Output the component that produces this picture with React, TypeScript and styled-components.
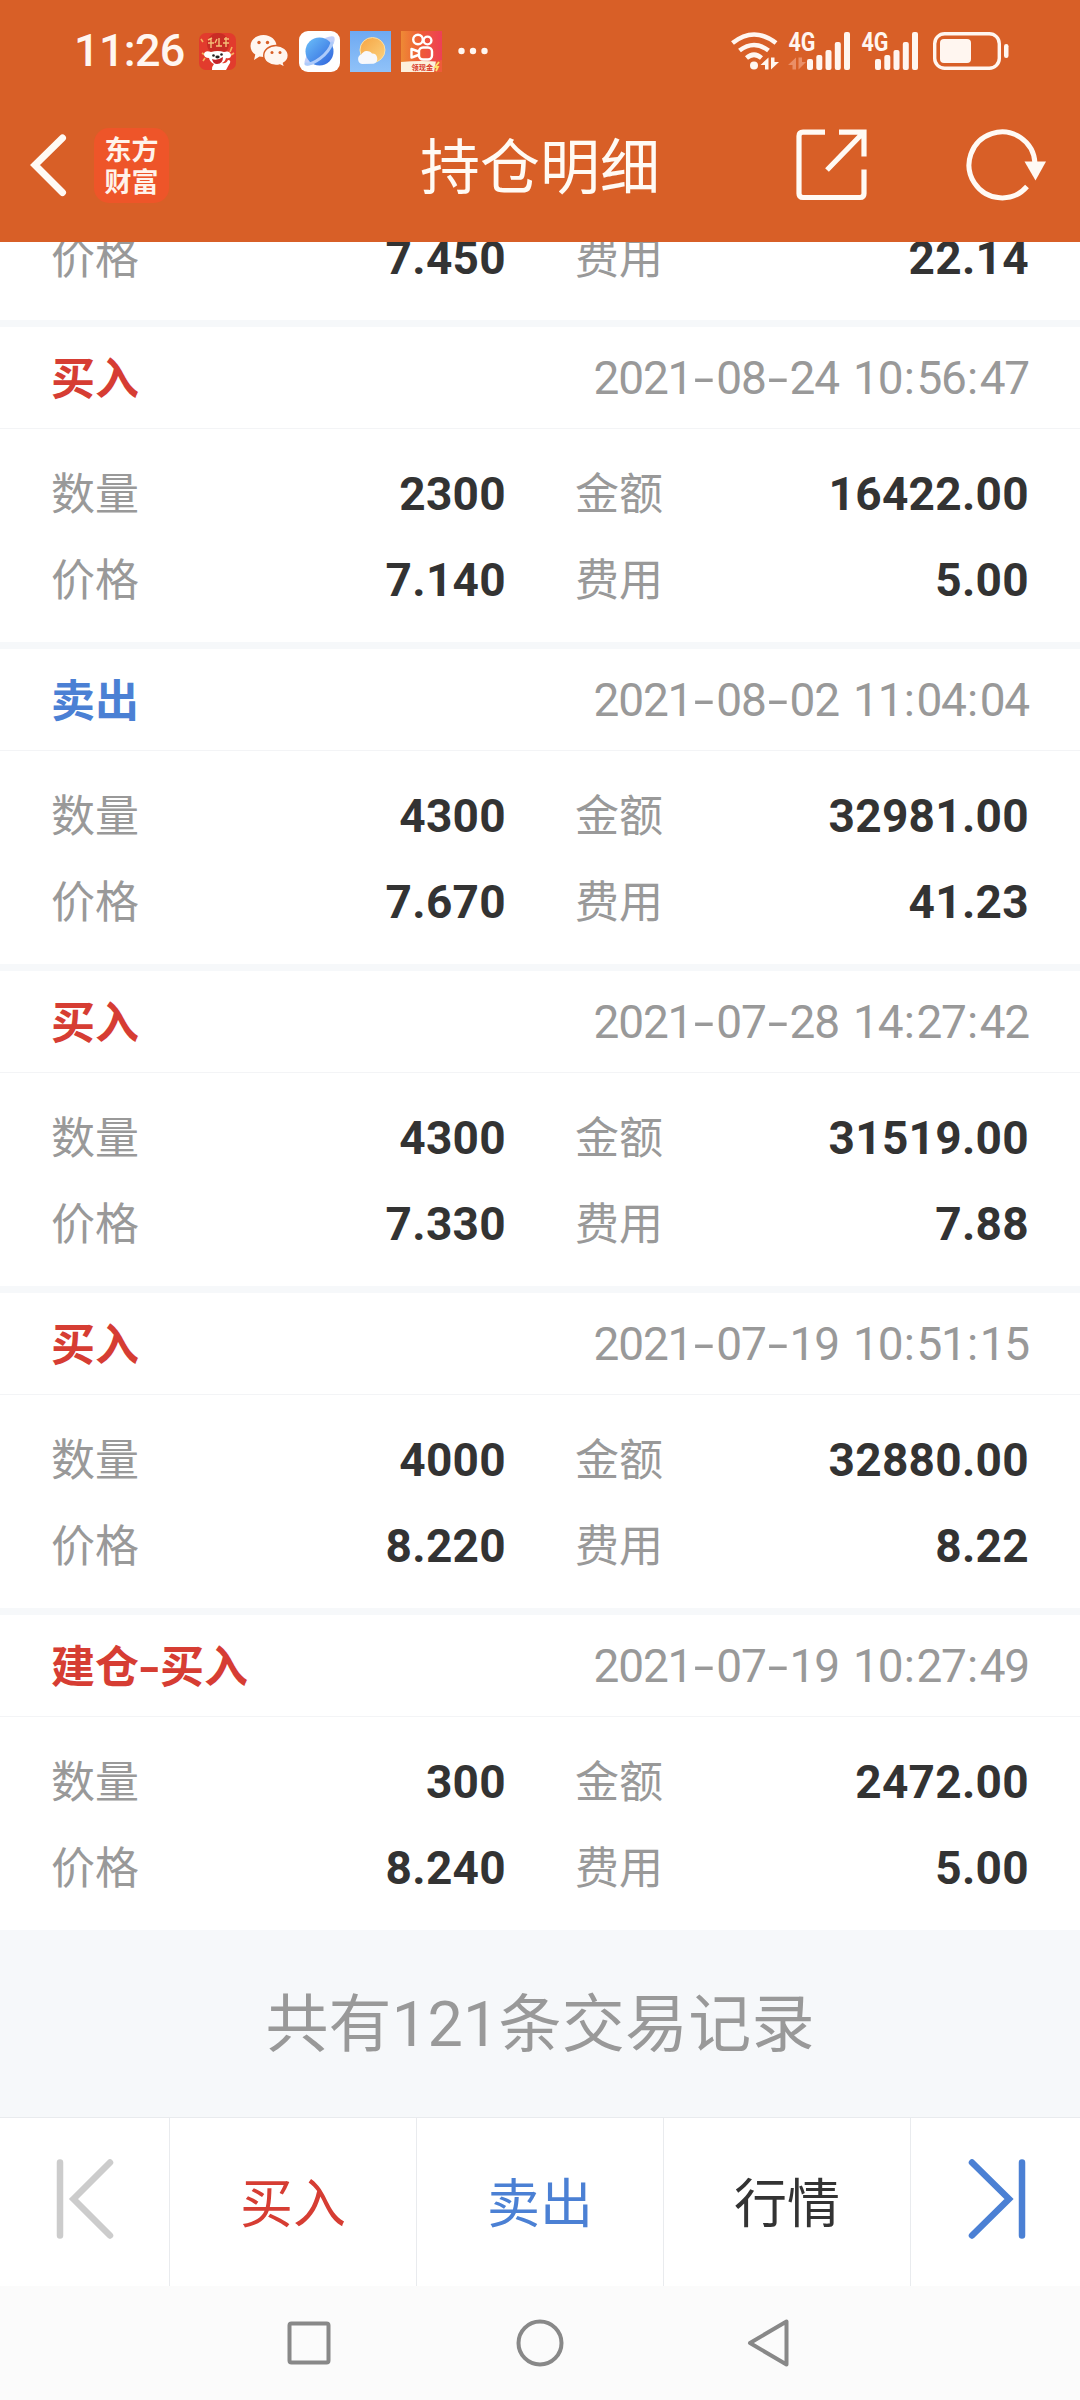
import React from "react";
import styled, { createGlobalStyle } from "styled-components";

const ORANGE = "#d85f27";
const RED = "#d63d33";
const BLUE = "#4b80d4";
const GREY = "#999999";
const INK = "#333333";
const CREAM = "#fff6f0";

const Global = createGlobalStyle`
  * { box-sizing: border-box; }
  body { margin: 0; background: #fff; }
  svg { display: block; flex: none; overflow: visible; }
`;

const Screen = styled.div`
  width: 1080px;
  height: 2400px;
  display: flex;
  flex-direction: column;
  overflow: hidden;
  background: #ffffff;
  font-family: Roboto, "Noto Sans CJK SC", sans-serif;
`;

const StatusBar = styled.div`
  height: 102px;
  flex: none;
  background: ${ORANGE};
  color: ${CREAM};
  display: flex;
  justify-content: space-between;
  padding: 0 71px 0 74px;
`;

const StatusGroup = styled.div`
  height: 102px;
  display: flex;
  align-items: center;
  gap: 10px;
`;

const Clock = styled.span`
  width: 111px;
  margin-right: 4px;
  font-size: 45px;
  line-height: 102px;
  font-weight: 500;
  letter-spacing: -0.7px;
  white-space: nowrap;
`;

const Spaced = styled.span<{ $left?: number; $right?: number }>`
  margin-left: ${(p) => p.$left || 0}px;
  margin-right: ${(p) => p.$right || 0}px;
`;

const TitleBar = styled.header`
  height: 140px;
  flex: none;
  background: ${ORANGE};
  display: grid;
  grid-template-columns: 420px 240px 1fr;
  align-items: start;
`;

const TitleLeft = styled.div`
  height: 126px;
  display: flex;
  align-items: center;
  gap: 27px;
  padding-left: 30px;
`;

const Logo = styled.div`
  width: 75px;
  height: 75px;
  border-radius: 15px;
  background: #ee5529;
  color: #fff3ea;
  display: flex;
  flex-direction: column;
  align-items: center;
  justify-content: center;
  font-family: "Noto Sans CJK SC", sans-serif;
  font-weight: 700;
  font-size: 27px;
  line-height: 32px;
`;

const Title = styled.h1`
  margin: 0;
  padding-top: 4px;
  color: #fffaf4;
  font-size: 60px;
  font-weight: 400;
  line-height: 126px;
  white-space: nowrap;
`;

const TitleActions = styled.div`
  height: 126px;
  display: flex;
  align-items: center;
  justify-content: space-between;
  padding: 0 33px 0 136px;
`;

const List = styled.main`
  flex: 1;
  min-height: 0;
  overflow: hidden;
  display: flex;
  flex-direction: column;
  justify-content: flex-end;
  gap: 7px;
  background: #f6f8fa;
`;

const Card = styled.section`
  flex: none;
  background: #fff;
`;

const CardHead = styled.div`
  height: 102px;
  padding: 0 52px 0 51px;
  border-bottom: 1px solid #f3f4f6;
  display: flex;
  align-items: center;
  justify-content: space-between;
`;

const Kind = styled.span<{ $color: string }>`
  padding-top: 4px;
  color: ${(p) => p.$color};
  font-size: 44px;
  line-height: 60px;
  font-weight: 700;
`;

const Stamp = styled.span`
  padding-top: 1px;
  color: ${GREY};
  font-size: 46px;
  line-height: 60px;
  letter-spacing: -1.2px;
  word-spacing: 4px;
  margin-right: -1px;
`;

const Mark = styled.span<{ $width: number; $stretch: number }>`
  display: inline-block;
  width: ${(p) => p.$width}px;
  text-align: center;
  letter-spacing: 0;
  transform: scaleX(${(p) => p.$stretch});
`;

const CardBody = styled.div<{ $top: number }>`
  padding: ${(p) => p.$top}px 52px 20px 51px;
`;

const Row = styled.div`
  height: 86px;
  display: grid;
  grid-template-columns: 454px 453px;
  column-gap: 70px;
`;

const Cell = styled.div`
  display: flex;
  align-items: center;
  justify-content: space-between;
`;

const Label = styled.span`
  padding-top: 4px;
  color: ${GREY};
  font-size: 44px;
  line-height: 60px;
`;

const Value = styled.span`
  padding-top: 1px;
  color: ${INK};
  font-size: 46px;
  line-height: 60px;
  font-weight: 700;
  letter-spacing: 0.3px;
  margin-right: -1px;
`;

const Summary = styled.div`
  height: 187px;
  flex: none;
  margin-top: -7px;
  padding-top: 3px;
  background: #f6f8fa;
  color: ${GREY};
  font-size: 63px;
  line-height: 184px;
  letter-spacing: 0.2px;
  text-align: center;
`;

const Tabs = styled.footer`
  height: 169px;
  flex: none;
  border-top: 1px solid #e9ebee;
  display: grid;
  grid-template-columns: 170px 247px 247px 247px 169px;
`;

const Tab = styled.button<{ $color?: string; $last?: boolean; $icon?: boolean }>`
  border: 0;
  border-right: ${(p) => (p.$last ? "0" : "1px solid #e9ebee")};
  margin: 0;
  padding: ${(p) => (p.$icon ? "0 0 6px" : "5px 0 0")};
  background: #fff;
  color: ${(p) => p.$color || INK};
  font-family: inherit;
  font-size: 53px;
  line-height: 80px;
  display: flex;
  align-items: center;
  justify-content: center;
`;

const NavBar = styled.nav`
  height: 114px;
  flex: none;
  background: #fbfbfb;
  display: grid;
  grid-template-columns: repeat(3, 231px);
  justify-content: center;
  justify-items: center;
  align-items: center;
`;

function StoreIcon() {
  return (
    <svg width="37" height="37" viewBox="0 0 37 37">
      <rect width="37" height="37" rx="7" fill="#e23b2d" />
      <circle cx="19" cy="11" r="11" fill="#c92d25" />
      <path d="M9 7l4-2M9 10h6M12 6v9M18 6l-2 4M20 5v8M17 13h6M25 6h5M27 4v10M24 10h6" stroke="#f5c077" strokeWidth="1.4" fill="none" />
      <path d="M2 6l2 3M33 14l-2 5M3 20l3 2M4 28l2-3M35 20l-3 2" stroke="#f5b05f" strokeWidth="1.6" />
      <path d="M5 21q1-4 7-2q7-2 13 0q6-2 7 3q0 4-5 3q-1 4-4 5q4 1 6-3q3 0 2 3q-2 3-4 7H13q0-4 2-6q-4-2-5-6q-5 0-5-4z" fill="#fff" />
      <path d="M13 26q5 2 11-2q0 7-6 7q-4 0-5-5z" fill="#c3242a" />
      <circle cx="14.500" cy="22.500" r="1.300" fill="#222" />
      <ellipse cx="18.500" cy="24" rx="2.200" ry="1.400" fill="#222" />
      <circle cx="22.500" cy="21.500" r="1.300" fill="#222" />
    </svg>
  );
}

function ChatIcon() {
  return (
    <svg width="39" height="34" viewBox="0 0 39 34">
      <path d="M13.500 1C6 1 0.500 5.800 0.500 12c0 3.600 1.900 6.600 4.800 8.600L4 26l5.500-3.400c1.300.3 2.600.4 4 .4C21 23 26.500 18 26.500 12S21 1 13.500 1z" fill={CREAM} />
      <path d="M26 11.500c-6.800 0-12.300 4.300-12.300 10s5.500 10 12.300 10c1.400 0 2.800-.2 4-.6l4.800 2.500-1.300-4.200c3-1.800 4.800-4.600 4.800-7.700 0-5.700-5.500-10-12.300-10z" fill={CREAM} stroke={ORANGE} strokeWidth="1.4" />
      <g fill={ORANGE}>
        <circle cx="9" cy="8.500" r="1.700" />
        <circle cx="17.500" cy="8.500" r="1.700" />
        <circle cx="22" cy="18.500" r="1.500" />
        <circle cx="30" cy="18.500" r="1.500" />
      </g>
    </svg>
  );
}

function BrowserIcon() {
  return (
    <svg width="41" height="41" viewBox="0 0 41 41">
      <defs>
        <linearGradient id="globe" x1="0" y1="0" x2="1" y2="1">
          <stop offset="0" stopColor="#6cc0fa" />
          <stop offset="1" stopColor="#2f63dc" />
        </linearGradient>
      </defs>
      <rect width="41" height="41" rx="9" fill="#fff" />
      <path d="M26 7q8-3 9.500-.5q1 4-3.500 11M8 24q-4 8-1.500 10q4 1.500 10-2" fill="#c3d0f9" />
      <circle cx="20.500" cy="20.500" r="14" fill="url(#globe)" />
      <path d="M7 33q5 1 14-5.500T33 12" fill="none" stroke="#aecbfa" strokeWidth="3" strokeLinecap="round" />
    </svg>
  );
}

function WeatherIcon() {
  return (
    <svg width="41" height="41" viewBox="0 0 41 41">
      <defs>
        <linearGradient id="sky" x1="0" y1="0" x2="0" y2="1">
          <stop offset="0" stopColor="#6ea9f2" />
          <stop offset="1" stopColor="#90c2f8" />
        </linearGradient>
        <linearGradient id="sun" x1="0" y1="0" x2="1" y2="1">
          <stop offset="0" stopColor="#f6a443" />
          <stop offset="1" stopColor="#fbd37f" />
        </linearGradient>
      </defs>
      <rect width="41" height="41" fill="url(#sky)" />
      <circle cx="22.500" cy="19" r="12.500" fill="url(#sun)" stroke="#fbe0a5" strokeWidth="1" />
      <path d="M12 33a5 5 0 0 1-.8-9.500A6.500 6.500 0 0 1 22 22.500a5.200 5.200 0 0 1 1.500 10.200z" fill="#f7f8fb" />
    </svg>
  );
}

function VideoIcon() {
  return (
    <svg width="41" height="41" viewBox="0 0 41 41">
      <defs>
        <linearGradient id="video" x1="0" y1="0" x2="1" y2="0">
          <stop offset="0" stopColor="#ee8a35" />
          <stop offset="0.500" stopColor="#ef5a37" />
          <stop offset="1" stopColor="#ee3f56" />
        </linearGradient>
      </defs>
      <rect width="41" height="41" fill="url(#video)" />
      <g fill="none" stroke="#fff" strokeWidth="2.400">
        <circle cx="17" cy="8.500" r="4.800" />
        <circle cx="26.500" cy="9.500" r="3.900" />
        <rect x="18" y="16.500" width="13" height="12" rx="4" />
        <path d="M17.500 20.500l-7-2.500v8.500l7-2.500" strokeLinejoin="round" />
      </g>
      <path d="M0 31q20-2 41 0v10H0z" fill="#fdf0dc" />
      <path d="M35 30l6-1v12h-8z" fill="#ee5a3a" />
      <path d="M38 31l-4 5h3l-2 4" stroke="#fde26a" strokeWidth="1.800" fill="none" />
      <text x="10.500" y="38.500" fontSize="7.200" fontWeight="700" fill="#d83a2a" fontFamily="Noto Sans CJK SC, sans-serif">领现金</text>
    </svg>
  );
}

function MoreDots() {
  return (
    <svg width="30" height="8" viewBox="0 0 30 8" fill={CREAM}>
      <circle cx="3.500" cy="4" r="3.200" />
      <circle cx="15" cy="4" r="3.200" />
      <circle cx="26.500" cy="4" r="3.200" />
    </svg>
  );
}

function WifiIcon() {
  return (
    <svg width="48" height="38" viewBox="0 0 48 38">
      <g fill="none" stroke={CREAM} strokeWidth="4.600">
        <path d="M2.500 11Q24 -6 46 11" />
        <path d="M9.500 18.500Q24 7.500 38.500 18.500" />
        <path d="M16.500 26Q24 19.500 31.500 26" />
      </g>
      <circle cx="24" cy="33.500" r="4" fill={CREAM} />
      <path d="M38.500 25.500v12H35v-4.500h-4.500zM41 37.500v-12h3.500V30H49z" fill={CREAM} />
    </svg>
  );
}

function SignalIcon({ data }: { data?: boolean }) {
  const shift = data ? 0 : -5;
  return (
    <svg width={data ? 63 : 62} height="38" viewBox={data ? "0 0 63 38" : "0 0 62 38"}>
      <text x="0.500" y="18.500" fontSize="25" fontWeight="700" fill={CREAM} fontFamily="Roboto, sans-serif" textLength="27" lengthAdjust="spacingAndGlyphs">4G</text>
      {data && <path d="M8 25.500v12H4.500v-4.500H0zM10.500 37.500v-12H14V30h4z" fill="#ea8f67" />}
      <g fill={CREAM}>
        <rect x={19 + shift} y="27" width="6" height="11" rx="2" />
        <rect x={28.300 + shift} y="23" width="6" height="15" rx="2" />
        <rect x={37.500 + shift} y="18" width="6" height="20" rx="2" />
        <rect x={46.800 + shift} y="10" width="6" height="28" rx="2" />
        <rect x={56 + shift} y="0" width="6" height="38" rx="2" />
      </g>
    </svg>
  );
}

function BatteryIcon() {
  return (
    <svg width="76" height="38" viewBox="0 0 76 38">
      <rect x="1.700" y="1.700" width="64.600" height="34.600" rx="10" fill="none" stroke={CREAM} strokeWidth="3.400" />
      <rect x="7" y="7" width="31" height="24" rx="4" fill={CREAM} />
      <rect x="71" y="12" width="4.500" height="14" rx="2.200" fill={CREAM} />
    </svg>
  );
}

function BackIcon() {
  return (
    <svg width="37" height="62" viewBox="0 0 37 62" fill="none" stroke="#fffaf4" strokeWidth="7">
      <path d="M32.500 4L5 31L32.500 58.500" strokeLinecap="round" />
    </svg>
  );
}

function ShareIcon() {
  return (
    <svg width="72" height="72" viewBox="0 0 72 72" fill="none" stroke="#fffaf4" strokeWidth="5.200">
      <path d="M29 3.100H7Q3 3.100 3 7.100V64.500Q3 68.500 7 68.500H64Q68 68.500 68 64.500V40.500" />
      <path d="M43 3.100H68V27.500M66 5L31 41" />
    </svg>
  );
}

function RefreshIcon() {
  return (
    <svg width="80" height="72" viewBox="0 0 80 72">
      <path d="M68 34.500A33 33 0 1 0 60 57.500" fill="none" stroke="#fffaf4" strokeWidth="5" />
      <path d="M57.500 32.500H79L68.500 51.500z" fill="#fffaf4" />
    </svg>
  );
}

function FirstIcon() {
  return (
    <svg width="58" height="80" viewBox="0 0 58 80" fill="none" stroke="#cccccc" strokeWidth="6.500">
      <path d="M4 3.500V76.500M54 3.500L17.500 40L54 76.500" strokeLinecap="round" />
    </svg>
  );
}

function LastIcon() {
  return (
    <svg width="58" height="80" viewBox="0 0 58 80" fill="none" stroke={BLUE} strokeWidth="6.500">
      <path d="M55 3.500V76.500M5 3.500L42 40L5 76.500" strokeLinecap="round" />
    </svg>
  );
}

interface Trade {
  kind: string;
  sell?: boolean;
  time: string;
  count: string;
  amount: string;
  price: string;
  fee: string;
}

const trades: Trade[] = [
  { kind: "买入", time: "2021-08-24 10:56:47", count: "2300", amount: "16422.00", price: "7.140", fee: "5.00" },
  { kind: "卖出", sell: true, time: "2021-08-02 11:04:04", count: "4300", amount: "32981.00", price: "7.670", fee: "41.23" },
  { kind: "买入", time: "2021-07-28 14:27:42", count: "4300", amount: "31519.00", price: "7.330", fee: "7.88" },
  { kind: "买入", time: "2021-07-19 10:51:15", count: "4000", amount: "32880.00", price: "8.220", fee: "8.22" },
  { kind: "建仓-买入", time: "2021-07-19 10:27:49", count: "300", amount: "2472.00", price: "8.240", fee: "5.00" },
];

function Marked({ text, dash, stretch }: { text: string; dash: number; stretch: number }) {
  return (
    <>
      {text.split(/([-:])/).map((part, i) => {
        if (part === "-") return <Mark key={i} $width={dash} $stretch={stretch}>-</Mark>;
        if (part === ":") return <Mark key={i} $width={14} $stretch={1}>:</Mark>;
        return <React.Fragment key={i}>{part}</React.Fragment>;
      })}
    </>
  );
}

function Pair({ items }: { items: [string, string][] }) {
  return (
    <Row>
      {items.map(([label, value]) => (
        <Cell key={label}>
          <Label>{label}</Label>
          <Value>{value}</Value>
        </Cell>
      ))}
    </Row>
  );
}

export default function App() {
  return (
    <Screen>
      <Global />
      <StatusBar>
        <StatusGroup>
          <Clock>11:26</Clock>
          <StoreIcon />
          <Spaced $left={4}><ChatIcon /></Spaced>
          <BrowserIcon />
          <WeatherIcon />
          <VideoIcon />
          <Spaced $left={6}><MoreDots /></Spaced>
        </StatusGroup>
        <StatusGroup>
          <WifiIcon />
          <SignalIcon data />
          <SignalIcon />
          <BatteryIcon />
        </StatusGroup>
      </StatusBar>
      <TitleBar>
        <TitleLeft>
          <BackIcon />
          <Logo>
            <span>东方</span>
            <span>财富</span>
          </Logo>
        </TitleLeft>
        <Title>持仓明细</Title>
        <TitleActions>
          <ShareIcon />
          <RefreshIcon />
        </TitleActions>
      </TitleBar>
      <List>
        <Card>
          <CardBody $top={0}>
            <Pair items={[["价格", "7.450"], ["费用", "22.14"]]} />
          </CardBody>
        </Card>
        {trades.map((t) => (
          <Card key={t.time}>
            <CardHead>
              <Kind $color={t.sell ? BLUE : RED}>
                <Marked text={t.kind} dash={21} stretch={1.4} />
              </Kind>
              <Stamp>
                <Marked text={t.time} dash={24} stretch={1.6} />
              </Stamp>
            </CardHead>
            <CardBody $top={21}>
              <Pair items={[["数量", t.count], ["金额", t.amount]]} />
              <Pair items={[["价格", t.price], ["费用", t.fee]]} />
            </CardBody>
          </Card>
        ))}
        <Summary>共有121条交易记录</Summary>
      </List>
      <Tabs>
        <Tab $icon><FirstIcon /></Tab>
        <Tab $color={RED}>买入</Tab>
        <Tab $color={BLUE}>卖出</Tab>
        <Tab>行情</Tab>
        <Tab $last $icon><LastIcon /></Tab>
      </Tabs>
      <NavBar>
        <svg width="48" height="48" viewBox="0 0 48 48" fill="none" stroke="#888" strokeWidth="4">
          <rect x="4.500" y="4.500" width="39" height="39" rx="2" />
        </svg>
        <svg width="48" height="48" viewBox="0 0 48 48" fill="none" stroke="#888" strokeWidth="4">
          <circle cx="24" cy="24" r="21.500" />
        </svg>
        <svg width="48" height="48" viewBox="0 0 48 48" fill="none" stroke="#888" strokeWidth="4" strokeLinejoin="round">
          <path d="M39.500 2.500V45.500L3 24z" />
        </svg>
      </NavBar>
    </Screen>
  );
}
